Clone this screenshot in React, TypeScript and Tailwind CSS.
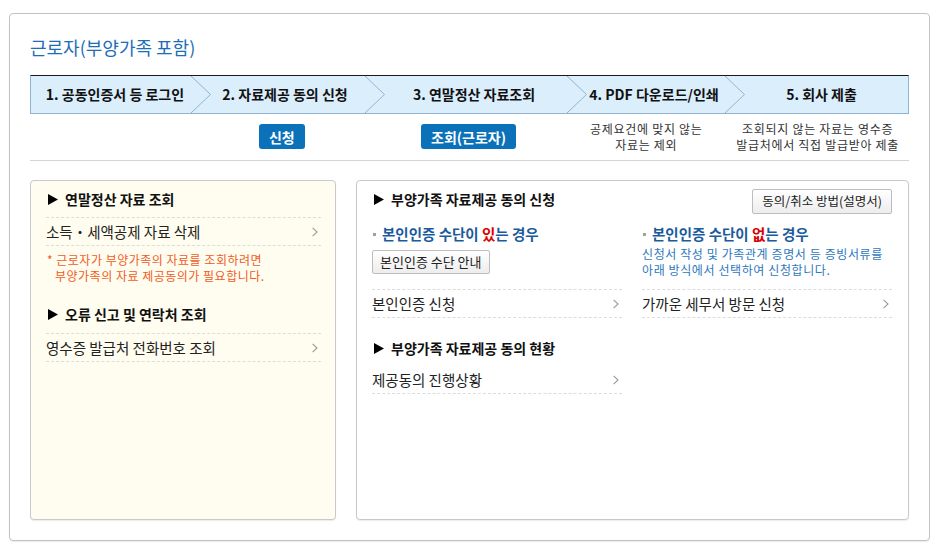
import React from 'react';

const Tri = () => (
  <svg width="10" height="11" viewBox="0 0 10 11" className="shrink-0 block">
    <path d="M0 0 L10 5.5 L0 11 Z" fill="#000" />
  </svg>
);

const Chev = () => (
  <svg width="6" height="10" viewBox="0 0 6 10" className="shrink-0 block">
    <path d="M0.6 0.8 L5 5 L0.6 9.2" fill="none" stroke="#9a9a9a" strokeWidth="1.1" />
  </svg>
);

const StepArrow = () => (
  <svg width="20" height="37" viewBox="0 0 20 37" className="shrink-0 block">
    <path d="M0 0 L19.5 18.5 L0 37" fill="none" stroke="#90b3d5" strokeWidth="1" />
  </svg>
);

const Bullet = () => <span className="block w-[3px] h-[3px] bg-[#a0a0a0] ml-[1px] mr-[6px] shrink-0" />;

const Heading = ({ children }: { children: React.ReactNode }) => (
  <div className="flex items-center gap-[7px] h-[20px] pl-[2px] text-[14px] font-bold text-[#111] leading-[20px]">
    <Tri />
    <span>{children}</span>
  </div>
);

const Row = ({ children, top = true }: { children: React.ReactNode; top?: boolean }) => (
  <div
    className={
      top
        ? 'flex items-center justify-between h-[29px] border-t border-b border-dashed border-[#dcdcdc] pr-[3px] text-[14.5px] text-[#222]'
        : 'flex items-center justify-between h-[27px] border-b border-dashed border-[#dcdcdc] pr-[3px] text-[14.5px] text-[#222]'
    }
  >
    <span>{children}</span>
    <Chev />
  </div>
);

const BlueBtn = ({ children }: { children: React.ReactNode }) => (
  <div className="flex items-center justify-center h-[25px] px-[10px] rounded-[3px] bg-[#0b72ba] text-white text-[14px] font-bold leading-none">
    {children}
  </div>
);

export default function App() {
  return (
    <div className="w-[939px] h-[547px] bg-white font-['Noto_Sans_CJK_KR','Noto_Sans',sans-serif] overflow-hidden">
      <div className="ml-[9px] mt-[13px] w-[921px] h-[528px] border border-[#c2c2c2] rounded-[4px] shadow-[0_1px_1px_rgba(0,0,0,0.08)] px-[20px] pt-[21px] pb-[20px] flex flex-col">
        <div className="h-[24px] leading-[24px] text-[18px] text-[#1d6db7] mb-[16px]">근로자(부양가족 포함)</div>

        {/* step bar */}
        <div className="flex h-[39px] border-t border-t-[#1a1a1a] border-b border-b-[#90b3d5] border-l border-l-[#90b3d5] border-r border-r-[#90b3d5] bg-[#dbeefc] text-[14px] font-bold text-[#111] whitespace-nowrap">
          <div className="w-[160px] flex items-center justify-center pl-[8px]">1. 공동인증서 등 로그인</div>
          <StepArrow />
          <div className="w-[154px] flex items-center justify-center pr-[6px]">2. 자료제공 동의 신청</div>
          <StepArrow />
          <div className="w-[182px] flex items-center justify-center pr-[4px]">3. 연말정산 자료조회</div>
          <StepArrow />
          <div className="w-[138px] flex items-center justify-center pr-[4px]">4. PDF 다운로드/인쇄</div>
          <StepArrow />
          <div className="flex-1 flex items-center justify-center pr-[10px]">5. 회사 제출</div>
        </div>

        {/* sub row */}
        <div className="flex h-[47px] border-b border-[#d4d4d4] pl-[1px]">
          <div className="w-[160px]" />
          <div className="w-[20px]" />
          <div className="w-[154px] flex justify-center pt-[10px] pr-[6px]">
            <div><BlueBtn>신청</BlueBtn></div>
          </div>
          <div className="w-[20px]" />
          <div className="w-[182px] flex justify-center pt-[10px] pr-[4px]">
            <div><BlueBtn>조회(근로자)</BlueBtn></div>
          </div>
          <div className="w-[20px]" />
          <div className="w-[138px] flex justify-center pt-[7px] pr-[4px]">
            <div className="text-center whitespace-nowrap text-[12px] tracking-[0.7px] leading-[16px] text-[#333]">
              공제요건에 맞지 않는
              <br />
              자료는 제외
            </div>
          </div>
          <div className="w-[20px]" />
          <div className="flex-1 flex justify-center pt-[7px] pr-[10px]">
            <div className="text-center whitespace-nowrap text-[12px] tracking-[0.7px] leading-[16px] text-[#333]">
              조회되지 않는 자료는 영수증
              <br />
              발급처에서 직접 발급받아 제출
            </div>
          </div>
        </div>

        {/* panels */}
        <div className="flex gap-[20px] mt-[19px] h-[340px]">
          <div className="w-[306px] h-full border border-[#c9c9c9] rounded-[4px] bg-[#fffdef] shadow-[0_1px_1px_rgba(0,0,0,0.08)] pl-[15px] pr-[14px] pt-[8px]">
            <Heading>연말정산 자료 조회</Heading>
            <div className="mt-[8px]">
              <Row>소득・세액공제 자료 삭제</Row>
            </div>
            <div className="mt-[6px] text-[12px] tracking-[0.5px] leading-[16px] text-[#f15a24] pl-[1px] whitespace-nowrap">
              <div>* 근로자가 부양가족의 자료를 조회하려면</div>
              <div className="pl-[8px]">부양가족의 자료 제공동의가 필요합니다.</div>
            </div>
            <div className="mt-[20px]">
              <Heading>오류 신고 및 연락처 조회</Heading>
            </div>
            <div className="mt-[9px]">
              <Row>영수증 발급처 전화번호 조회</Row>
            </div>
          </div>

          <div className="flex-1 h-full border border-[#c9c9c9] rounded-[4px] bg-white shadow-[0_1px_1px_rgba(0,0,0,0.08)] pl-[15px] pr-[14px] pt-[8px]">
            <div className="flex items-start justify-between">
              <Heading>부양가족 자료제공 동의 신청</Heading>
              <div className="mr-[2px] h-[25px] flex">
                <div className="flex items-center justify-center border border-[#bdbdbd] rounded-[2px] bg-linear-to-b from-white to-[#ededed] text-[12.5px] text-[#222] px-[9px] whitespace-nowrap">
                  동의/취소 방법(설명서)
                </div>
              </div>
            </div>

            <div className="flex gap-[20px] mt-[10px]">
              <div className="w-[250px]">
                <div className="h-[65px]">
                  <div className="flex items-center h-[20px] text-[14.5px] font-bold text-[#1a5b9c] whitespace-nowrap">
                    <Bullet />
                    <span>
                      본인인증 수단이 <span className="text-[#d90000]">있</span>는 경우
                    </span>
                  </div>
                  <div className="mt-[6px] h-[24px] flex">
                    <div className="flex items-center justify-center border border-[#bdbdbd] rounded-[2px] bg-linear-to-b from-white to-[#ededed] text-[13px] text-[#222] px-[7px] whitespace-nowrap">
                      본인인증 수단 안내
                    </div>
                  </div>
                </div>
                <Row>본인인증 신청</Row>
              </div>
              <div className="w-[250px]">
                <div className="h-[65px]">
                  <div className="mt-0 flex items-center h-[20px] text-[14.5px] font-bold text-[#1a5b9c] whitespace-nowrap">
                    <Bullet />
                    <span>
                      본인인증 수단이 <span className="text-[#d90000]">없</span>는 경우
                    </span>
                  </div>
                  <div className="mt-[2px] text-[12px] tracking-[0.6px] leading-[16px] text-[#2d78bd] whitespace-nowrap">
                    신청서 작성 및 가족관계 증명서 등 증빙서류를
                    <br />
                    아래 방식에서 선택하여 신청합니다.
                  </div>
                </div>
                <Row>가까운 세무서 방문 신청</Row>
              </div>
            </div>

            <div className="mt-[20px]">
              <Heading>부양가족 자료제공 동의 현황</Heading>
            </div>
            <div className="mt-[9px] w-[250px]">
              <Row top={false}>제공동의 진행상황</Row>
            </div>
          </div>
        </div>
      </div>
    </div>
  );
}
